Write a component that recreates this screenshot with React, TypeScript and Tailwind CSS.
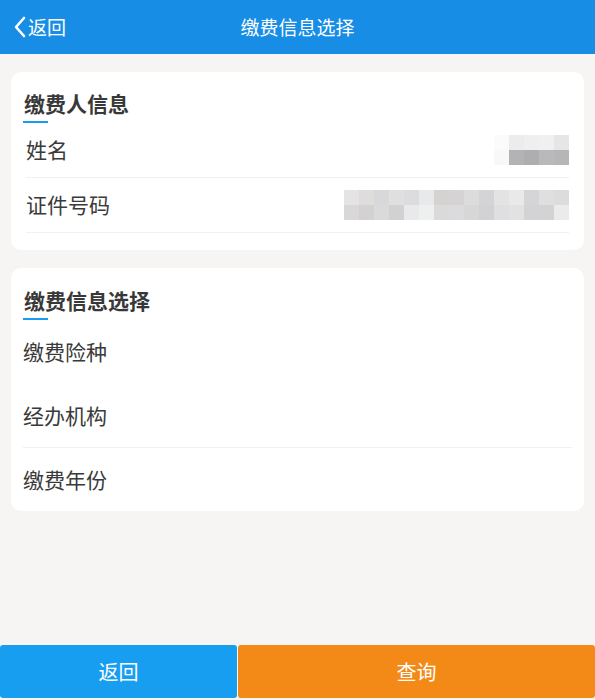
import React from 'react';

const nameTop = ['bg-[#fbfbfb]', 'bg-[#ececec]', 'bg-[#efefef]', 'bg-[#f0f0f0]', 'bg-[#e6e6e6]'];
const nameBottom = ['bg-[#f8f8f8]', 'bg-[#b3b3b5]', 'bg-[#aeaeb0]', 'bg-[#b9b9bb]', 'bg-[#b6b6b8]'];

const idTop = [
    'bg-[#e3e4e3]', 'bg-[#dfdddc]', 'bg-[#d8d7da]', 'bg-[#dfdfdf]', 'bg-[#dcdcdf]',
    'bg-[#e8e9ea]', 'bg-[#d5d3d2]', 'bg-[#d5d3d3]', 'bg-[#dddcdd]', 'bg-[#d4d3d6]',
    'bg-[#e3e3e3]', 'bg-[#e9e9e9]', 'bg-[#d5d4d6]', 'bg-[#dfdfe0]', 'bg-[#dcdcdf]',
];
const idBottom = [
    'bg-[#d8d8d8]', 'bg-[#d3d1d2]', 'bg-[#dadada]', 'bg-[#d1d1d1]', 'bg-[#e9e9eb]',
    'bg-[#eef0ef]', 'bg-[#dadada]', 'bg-[#dbdbdd]', 'bg-[#d7d7d7]', 'bg-[#d2d2d4]',
    'bg-[#dfdfe1]', 'bg-[#e2e2e2]', 'bg-[#d3d2d4]', 'bg-[#d3d3d3]', 'bg-[#ebebeb]',
];

// mosaic placeholder for masked personal data
function Mosaic({ top, bottom }: { top: string[]; bottom: string[] }) {
    return (
        <div className="flex flex-col">
            {[top, bottom].map((row, r) => (
                <div key={r} className="flex">
                    {row.map((c, i) => (
                        <div key={i} className={`w-[15px] h-[15px] ${c}`} />
                    ))}
                </div>
            ))}
        </div>
    );
}

function SectionTitle({ text }: { text: string }) {
    return (
        <div className="flex flex-col items-start">
            <div className="text-[21px] leading-[28px] font-bold text-[#383838] pl-[1px]">{text}</div>
            <div className="mt-[4px] w-[25px] h-[2px] bg-[#1a9bef]" />
        </div>
    );
}

export default function App() {
    return (
        <div
            className="min-h-[700px] flex flex-col bg-[#f6f5f3]"
            style={{ fontFamily: '"Noto Sans CJK SC", "Noto Sans", sans-serif' }}
        >
            {/* Header */}
            <header className="relative h-[54px] bg-[#178de6] flex items-center justify-center text-white">
                <div className="absolute left-[13px] top-0 h-full flex items-center">
                    <svg width="13" height="22" viewBox="0 0 13 22" fill="none">
                        <path d="M11 2L3 11l8 9" stroke="white" strokeWidth="2.6" strokeLinecap="round" strokeLinejoin="round" />
                    </svg>
                    <span className="text-[19px] ml-[2px]">返回</span>
                </div>
                <h1 className="text-[19px]">缴费信息选择</h1>
            </header>

            <main className="flex-1 px-[11px] pt-[18px]">
                {/* Payer info */}
                <section className="bg-white rounded-[10px] px-[12px] pt-[17px] pb-[17px]">
                    <SectionTitle text="缴费人信息" />
                    <div className="mx-[3px]">
                        <div className="h-[55px] flex items-center justify-between border-b border-[#f0f0f0]">
                            <span className="text-[21px] text-[#3a3a3a]">姓名</span>
                            <Mosaic top={nameTop} bottom={nameBottom} />
                        </div>
                        <div className="h-[55px] flex items-center justify-between border-b border-[#f0f0f0]">
                            <span className="text-[21px] text-[#3a3a3a]">证件号码</span>
                            <Mosaic top={idTop} bottom={idBottom} />
                        </div>
                    </div>
                </section>

                {/* Payment selection */}
                <section className="mt-[18px] bg-white rounded-[10px] px-[12px] pt-[18px]">
                    <SectionTitle text="缴费信息选择" />
                    <div className="h-[64px] flex items-center text-[21px] text-[#3a3a3a]">缴费险种</div>
                    <div className="h-[64px] flex items-center text-[21px] text-[#3a3a3a] border-b border-[#f0f0f0]">经办机构</div>
                    <div className="h-[63px] flex items-center text-[21px] text-[#3a3a3a]">缴费年份</div>
                </section>
            </main>

            {/* Footer buttons */}
            <footer className="flex gap-[1px] pb-[2px]">
                <button className="w-[237px] h-[53px] bg-[#189ef1] text-white text-[20px] rounded-[3px]">返回</button>
                <button className="flex-1 h-[53px] bg-[#f38a18] text-white text-[20px] rounded-[3px]">查询</button>
            </footer>
        </div>
    );
}
